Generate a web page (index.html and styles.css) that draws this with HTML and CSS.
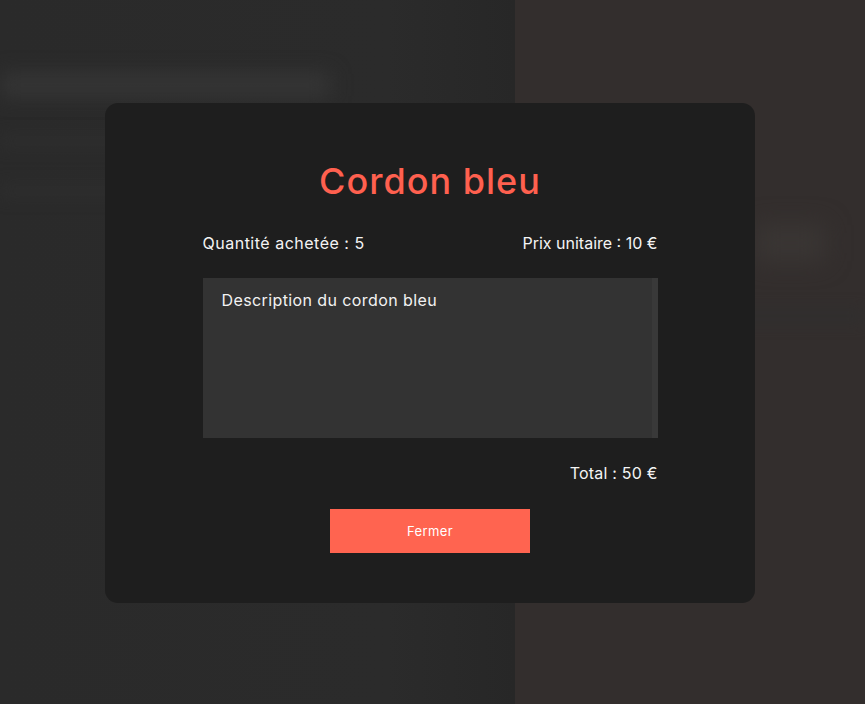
FILE: index.html
```html
<!DOCTYPE html>
<html lang="fr">
<head>
<meta charset="utf-8">
<title>Cordon bleu</title>
<link rel="stylesheet" href="styles.css">
</head>
<body>
<div class="backdrop">
  <div class="bg-left">
    <div class="bg-heading"></div>
    <div class="bg-line"></div>
    <div class="bg-line short"></div>
  </div>
  <div class="bg-right">
    <div class="bg-chip"></div>
    <div class="bg-line"></div>
  </div>
</div>
<div class="overlay">
  <div class="modal">
    <h1 class="title">Cordon bleu</h1>
    <div class="info-row">
      <span>Quantité achetée : 5</span>
      <span class="price">Prix unitaire : 10 €</span>
    </div>
    <div class="desc">
      <p>Description du cordon bleu</p>
      <div class="scroll"></div>
    </div>
    <div class="total">Total : 50 €</div>
    <button class="close">Fermer</button>
  </div>
</div>
</body>
</html>
```
FILE: styles.css
```css
html, body {
  margin: 0;
  padding: 0;
  height: 100%;
  overflow: hidden;
  background: #2a2a2a;
  font-family: Inter, "Noto Sans", sans-serif;
}

.backdrop {
  display: flex;
  height: 100%;
}

.bg-left {
  width: 515px;
  background: linear-gradient(90deg, #2a2a2a 0%, #2b2b2b 75%, #272727 100%);
  display: flex;
  flex-direction: column;
  padding-top: 74px;
  gap: 40px;
  box-sizing: border-box;
}

.bg-heading {
  width: 330px;
  height: 22px;
  background: #363636;
  filter: blur(10px);
}

.bg-line {
  height: 10px;
  width: 90%;
  background: #2f2f2f;
  filter: blur(8px);
}

.bg-line.short { width: 60%; }

.bg-right {
  flex: 1;
  background: #332e2d;
  display: flex;
  flex-direction: column;
  align-items: flex-end;
  padding-top: 225px;
  gap: 50px;
}

.bg-chip {
  width: 70px;
  height: 36px;
  margin-right: 40px;
  background: #3a3634;
  filter: blur(12px);
}

.overlay {
  position: fixed;
  inset: 0;
  display: flex;
  align-items: center;
  justify-content: center;
  padding-right: 5px;
  padding-top: 2px;
  box-sizing: border-box;
}

.modal {
  width: 650px;
  height: 500px;
  box-sizing: border-box;
  background: #1e1e1e;
  border-radius: 13px;
  display: flex;
  flex-direction: column;
  align-items: center;
  padding: 56px 0 0;
}

.title {
  margin: 0;
  color: #ff604f;
  font-size: 36px;
  font-weight: 500;
  line-height: 44px;
  letter-spacing: 1px;
}

.info-row {
  width: 455px;
  display: flex;
  justify-content: space-between;
  color: #f4f4f4;
  font-size: 16px;
  line-height: 20px;
  letter-spacing: 0.5px;
  margin-top: 30px;
}

.info-row .price {
  letter-spacing: 0;
}

.desc {
  width: 455px;
  height: 160px;
  margin-top: 25px;
  background: #333333;
  display: flex;
  justify-content: space-between;
  box-sizing: border-box;
}

.desc p {
  margin: 0;
  padding: 12px 19px;
  color: #f2f2f2;
  font-size: 16px;
  line-height: 20px;
  letter-spacing: 0.4px;
}

.scroll {
  width: 6px;
  background: #393939;
}

.total {
  width: 455px;
  text-align: right;
  color: #f4f4f4;
  font-size: 16px;
  line-height: 20px;
  letter-spacing: 0.2px;
  margin-top: 25px;
}

.close {
  margin-top: 26px;
  width: 200px;
  height: 44px;
  border: none;
  background: #ff6450;
  color: #ffffff;
  font-family: inherit;
  font-size: 13px;
  letter-spacing: 0.4px;
  padding: 0;
}
```
